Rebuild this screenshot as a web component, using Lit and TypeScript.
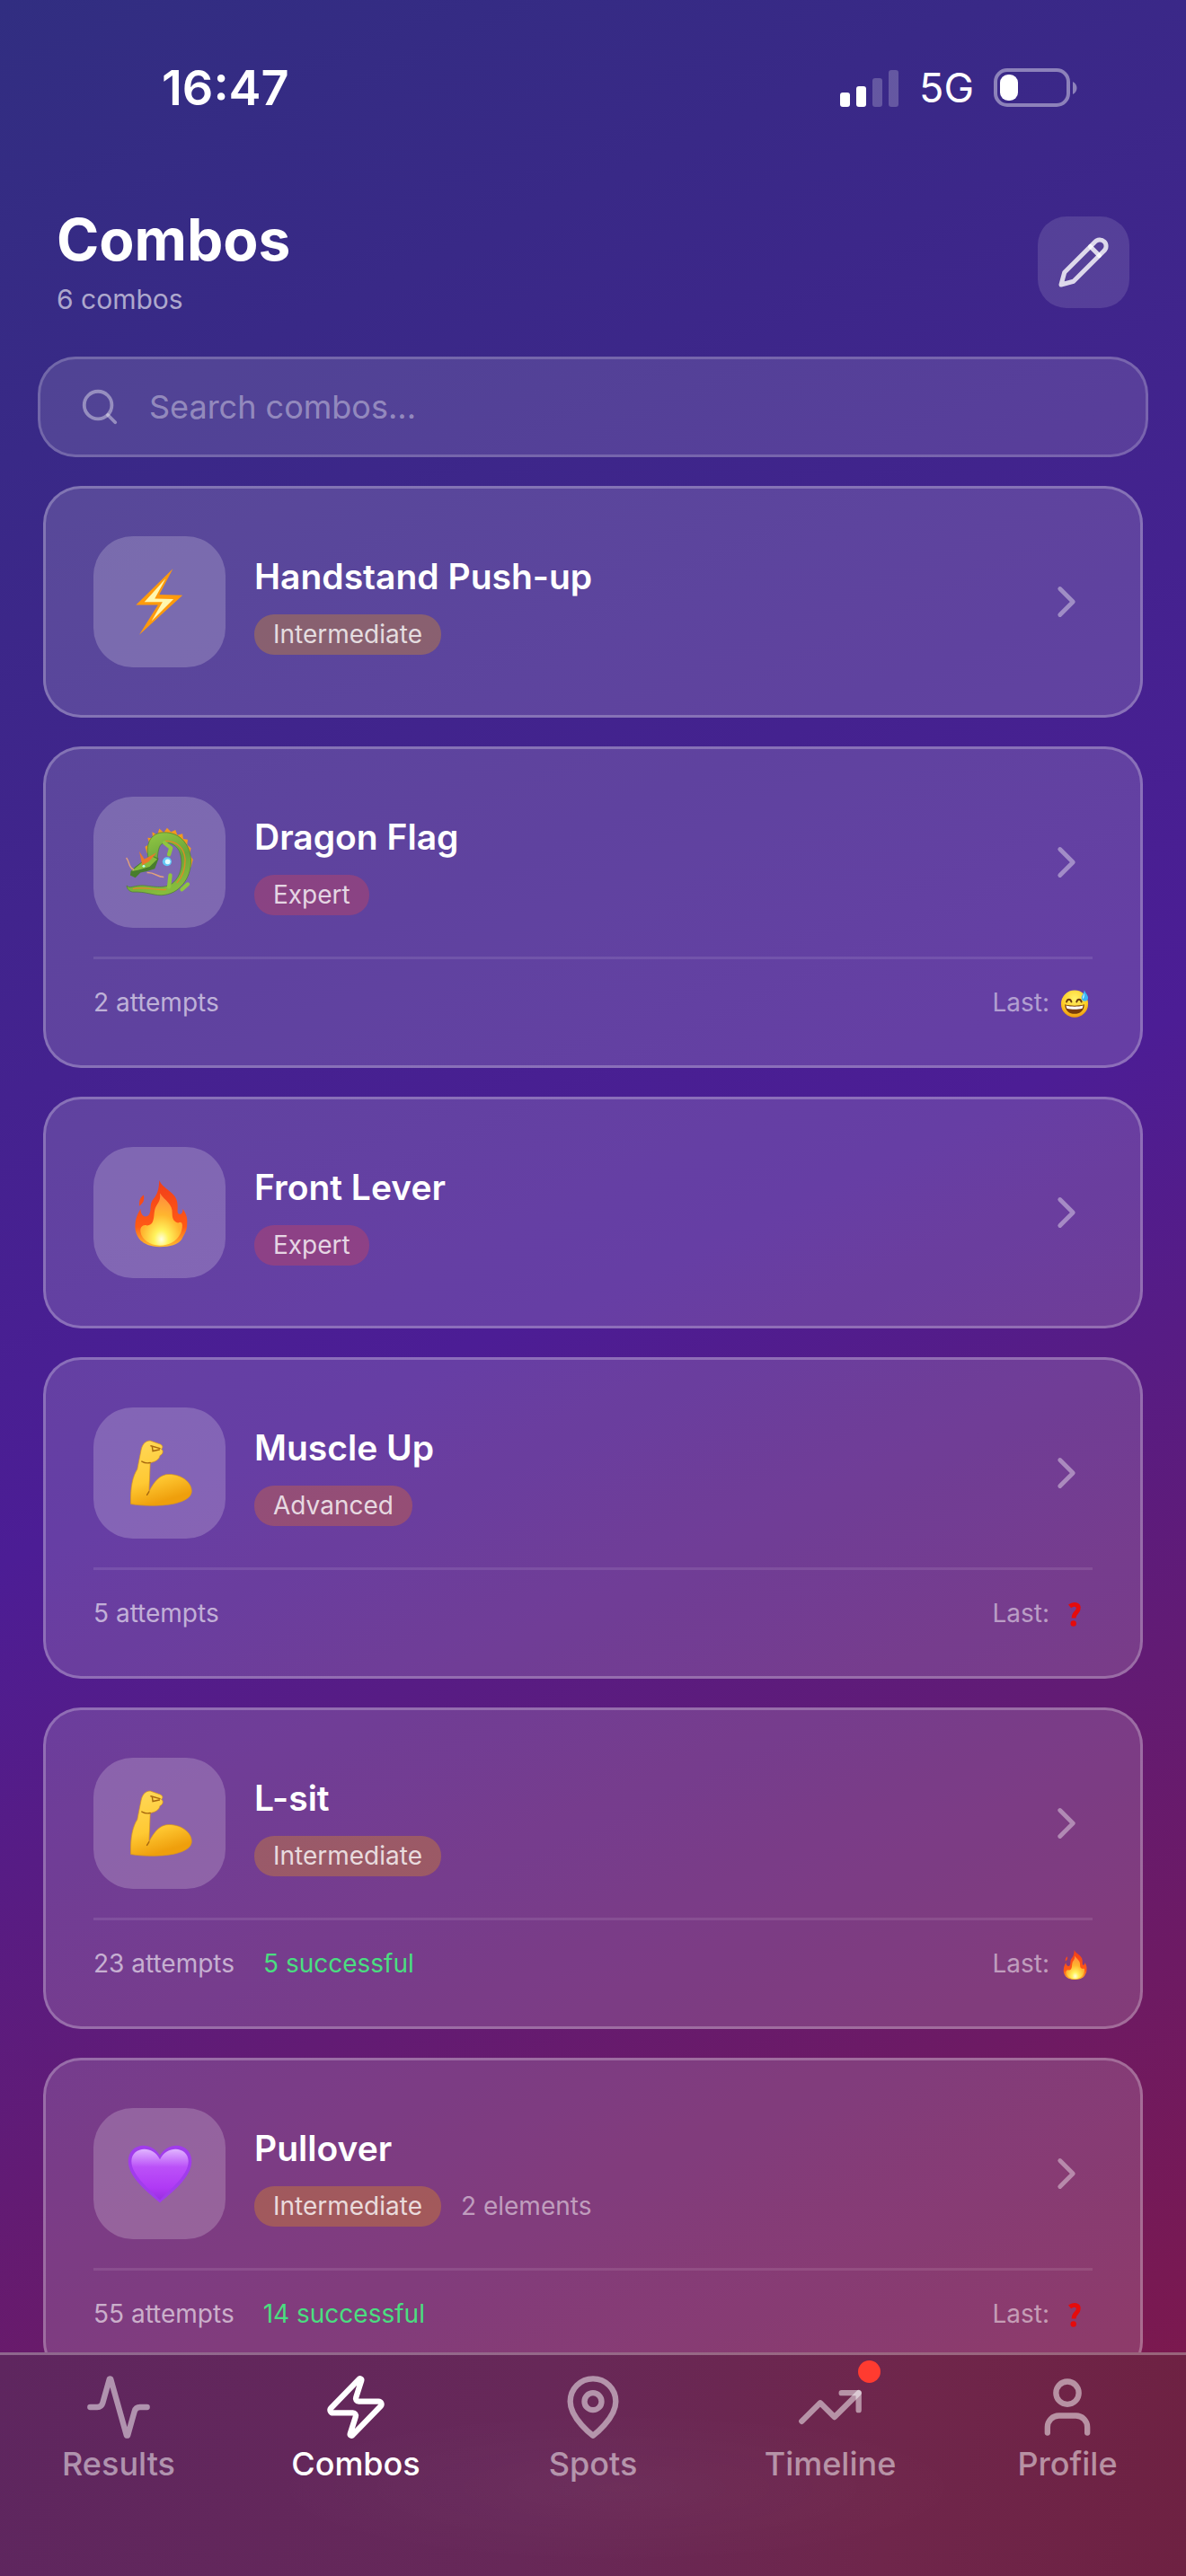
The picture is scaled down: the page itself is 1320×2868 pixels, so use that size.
import { LitElement, css, html, svg, TemplateResult } from 'lit'
import { customElement, property, state } from 'lit/decorators.js'
import { classMap } from 'lit/directives/class-map.js'

type Level = 'Intermediate' | 'Advanced' | 'Expert'

interface Combo {
  name: string
  emoji: string
  level: Level
  elements?: number
  attempts?: number
  successful?: number
  last?: string
}

const combos: Combo[] = [
  { name: 'Handstand Push-up', emoji: 'bolt', level: 'Intermediate' },
  { name: 'Dragon Flag', emoji: 'dragon', level: 'Expert', attempts: 2, last: 'sweat' },
  { name: 'Front Lever', emoji: 'fire', level: 'Expert' },
  { name: 'Muscle Up', emoji: 'arm', level: 'Advanced', attempts: 5, last: 'question' },
  { name: 'L-sit', emoji: 'arm', level: 'Intermediate', attempts: 23, successful: 5, last: 'fire' },
  { name: 'Pullover', emoji: 'heart', level: 'Intermediate', elements: 2, attempts: 55, successful: 14, last: 'question' },
]

// stroke icons on a 24px grid
const icons: Record<string, TemplateResult> = {
  activity: svg`<path d="M22 12h-2.48a2 2 0 0 0-1.93 1.46l-2.35 8.36a.25.25 0 0 1-.48 0L9.24 2.18a.25.25 0 0 0-.48 0l-2.35 8.36A2 2 0 0 1 4.49 12H2"/>`,
  zap: svg`<path d="M4 14a1 1 0 0 1-.78-1.63l9.9-10.2a.5.5 0 0 1 .86.46l-1.92 6.02A1 1 0 0 0 13 10h7a1 1 0 0 1 .78 1.63l-9.9 10.2a.5.5 0 0 1-.86-.46l1.92-6.02A1 1 0 0 0 11 14z"/>`,
  pin: svg`<path d="M20 10c0 6-8 12-8 12s-8-6-8-12a8 8 0 0 1 16 0Z"/><circle cx="12" cy="10" r="3"/>`,
  trending: svg`<path d="M22 7 13.5 15.5 8.5 10.5 2 17"/><path d="M16 7h6v6"/>`,
  user: svg`<path d="M19 21v-2a4 4 0 0 0-4-4H9a4 4 0 0 0-4 4v2"/><circle cx="12" cy="7" r="4"/>`,
  pencil: svg`<path d="M17 3a2.85 2.83 0 1 1 4 4L7.5 20.5 2 22l1.5-5.5Z"/><path d="m15 5 4 4"/>`,
  search: svg`<circle cx="11" cy="11" r="8"/><path d="m21 21-4.3-4.3"/>`,
  chevron: svg`<path d="m9 18 6-6-6-6"/>`,
}

const emojis: Record<string, TemplateResult> = {
  bolt: svg`
    <path fill="#ff9a0c" d="M70-1 49 39 85 40 18 101 47 55 13 55z"/>
    <path fill="#fff7b0" d="M59 14 26 50.500 54 50.500 37 80 71 46 42 45z"/>`,
  dragon: svg`
    <defs><linearGradient id="scales" x2=".4" y2="1"><stop stop-color="#9bd045"/><stop offset=".6" stop-color="#6ba53a"/><stop offset="1" stop-color="#86bb3d"/></linearGradient></defs>
    <path fill="#f39a1d" d="M30 36 27 26 34 22 31 12 39 13 38 3 46 8 49-2 56 4 61-3 67 3 74 0 77 8 85 6 86 14 93 15 92 23 98 28 96 38 101 46 98 58 88 40 70 14 45 18z"/>
    <path fill="url(#scales)" stroke="#4d8030" stroke-width="1" d="M32 44C27 18 38 4 56 4 82 3 98 25 98 48 98 75 80 100 52 101 38 101 28 95 8 96 2 95-2 90-1 86 3 92 10 85 26 86 45 88 62 92 74 78 84 66 86 48 80 33 74 21 62 18 54 21 48 24 47 34 46 46Z"/>
    <path fill="none" stroke="#d98d27" stroke-width="2" d="M58 17C78 17 88 30 89 46 89 62 84 74 76 82M8 91C28 87 44 94 60 92"/>
    <path fill="none" stroke="#8fc63f" stroke-width="6" stroke-linecap="round" stroke-linejoin="round" d="M57 20 67 28 64 38M66 70 64 88M84 92 93 84"/>
    <circle cx="61" cy="49" r="7" fill="#62c8f5"/><circle cx="62" cy="49" r="4" fill="#e2fbff"/>
    <path fill="#487d2d" d="M5 64 12 57 24 48 38 40 48 44 42 60 30 64 20 66 12 74 4 70z"/>
    <path fill="#86bd3c" d="M6 64 24 49 38 41 46 45 34 57 16 62z"/>
    <path fill="#e9782c" d="M22 51 18 33 26 45 45 35 33 49 22 55z"/>
    <path fill="none" stroke="#e0a07c" stroke-width="2" d="M10 62C0 57 4 50-2 43M30 66C42 65 45 73 56 73"/>
    <circle cx="25" cy="56" r="2" fill="#b4fff2"/>`,
  fire: svg`
    <defs>
      <linearGradient id="flame" x2="0" y2="1"><stop stop-color="#f13e19"/><stop offset=".7" stop-color="#ff5a16"/><stop offset="1" stop-color="#ffbd2e"/></linearGradient>
      <radialGradient id="core" cx=".5" cy=".88" r=".85"><stop stop-color="#fffddf"/><stop offset=".2" stop-color="#fff35c"/><stop offset=".55" stop-color="#ffb62f"/><stop offset="1" stop-color="#ff8b3d"/></radialGradient>
    </defs>
    <path fill="url(#flame)" d="M49 0C54 14 76 18 77 36 78 44 76 50 79 52 84 54 86 48 85 44 90 50 93 58 92 67 92 80 87 84 84 91 78 100 66 103 50 103 34 103 26 98 20 93 12 84 11 74 12 66 13 56 17 50 20 44 20 52 24 57 29 56 38 54 34 40 37 34 40 26 48 26 49 0ZM25 23C26 31 25 35 18 40 18 31 19 27 25 23Z"/>
    <path fill="url(#core)" d="M50 20C58 32 70 36 69 52 69 60 72 64 78 66 86 62 86 72 82 82 76 95 64 101 50 101 34 101 22 92 20 80 19 72 24 68 30 70 42 70 40 56 42 46 44 36 52 34 50 20Z"/>`,
  arm: svg`
    <defs><linearGradient id="skin" x2=".3" y2="1"><stop stop-color="#ffd95a"/><stop offset=".65" stop-color="#ffc933"/><stop offset="1" stop-color="#ef9f0c"/></linearGradient></defs>
    <path fill="url(#skin)" stroke="#d8951c" stroke-width="1" d="M21 14C23 5 28 0 35 0L49 5C55 7 55 11 52 13 56 15 55 21 50 23 49 29 43 33 35 34L34 60C33 67 34 73 33 79 41 63 50 52 64 52 83 52 99 64 99 78 99 92 74 99 50 100 32 101 18 100 5 98 4 72 8 55 15 44Z"/>
    <path fill="none" stroke="#a8690f" stroke-width="2" stroke-linecap="round" d="M36 8 50 12M38 9 39 16 49 14M22 32C27 35 31 35 35 34M33 79 30 84"/>`,
  heart: svg`
    <defs><linearGradient id="violet" x2="0" y2="1"><stop stop-color="#e0b5ff"/><stop offset=".35" stop-color="#bb51f8"/><stop offset=".75" stop-color="#b03af5"/><stop offset="1" stop-color="#9a2fe0"/></linearGradient></defs>
    <path fill="#a13cec" d="M50 95C35 82 1 57 1 31 1 3 36-2 50 22 64-2 99 3 99 31c0 26-34 51-49 64z"/>
    <path fill="url(#violet)" d="M50 91C38 77 6 54 6 31 6 9 38 4 50 28 62 4 94 9 94 31c0 23-32 46-44 60z"/>`,
  sweat: svg`
    <defs><radialGradient id="face" cx=".5" cy=".3" r=".7"><stop stop-color="#fff269"/><stop offset=".65" stop-color="#ffcf28"/><stop offset="1" stop-color="#ef980f"/></radialGradient></defs>
    <circle cx="50" cy="52" r="47" fill="url(#face)"/>
    <path fill="none" stroke="#6b3b0e" stroke-width="6" stroke-linecap="round" d="M22 45c3-11 14-11 17 0M57 45c3-11 14-11 17 0"/>
    <path fill="#7a3c0a" d="M16 54c20 6 47 6 68 0-1 23-16 33-34 33S17 77 16 54z"/>
    <path fill="#fff" d="M20 58c18 5 42 5 60 0l-3 10c-16 4-38 4-54 0z"/>
    <path fill="#39b5f5" d="M84 4c5 13 13 18 13 27 0 15-23 15-23 0 0-8 8-14 10-27z"/>
    <path fill="#c0edff" d="M83 15c2 8 1 14-3 20-5-6 1-12 3-20z"/>`,
  question: svg`
    <path fill="none" stroke="#e60b0b" stroke-width="15" d="M33 23c14-11 33-7 30 9-1 13-16 13-16 32"/>
    <circle cx="46" cy="83" r="10" fill="#e60b0b"/>`,
}

const icon = (name: string) => html`
  <svg class="icon" viewBox="0 0 24 24" fill="none" stroke="currentColor" stroke-width="2"
    stroke-linecap="round" stroke-linejoin="round" aria-hidden="true">${icons[name]}</svg>`

const emoji = (name: string) => html`
  <svg class="emoji" viewBox="0 0 100 100" aria-hidden="true">${emojis[name]}</svg>`

const shared = css`
  * {
    box-sizing: border-box;
  }
  button, a, input {
    font: inherit;
    color: inherit;
  }
  svg {
    display: block;
    flex: none;
    overflow: visible;
  }
`

@customElement('status-bar')
export class StatusBar extends LitElement {
  render() {
    return html`
      <span class="time">16:47</span>
      <div class="right">
        <svg width="66" height="42" viewBox="0 0 66 42" fill="#fff" aria-hidden="true">
          <rect y="26" width="11" height="16" rx="3"/>
          <rect x="18" y="19" width="11" height="23" rx="3"/>
          <rect x="36" y="10" width="11" height="32" rx="3" opacity=".22"/>
          <rect x="54" y="1" width="11" height="41" rx="3" opacity=".22"/>
        </svg>
        <span class="network">5G</span>
        <svg width="94" height="44" viewBox="0 0 94 44" aria-hidden="true">
          <rect x="2" y="2" width="81" height="39" rx="13" fill="none" stroke="#fff" stroke-opacity=".42" stroke-width="4"/>
          <rect x="7" y="7" width="20" height="29" rx="9" fill="#fff"/>
          <path d="M88 15c6 3 6 11 0 14z" fill="#fff" opacity=".42"/>
        </svg>
      </div>
    `
  }

  static styles = [shared, css`
    :host {
      display: flex;
      justify-content: space-between;
      align-items: center;
      padding: 65px 120px 0 180px;
    }
    .time {
      font-size: 54px;
      line-height: 66px;
      font-weight: 600;
    }
    .right {
      display: flex;
      align-items: center;
      gap: 22px;
    }
    .network {
      font-size: 45px;
      line-height: 54px;
      font-weight: 400;
    }
  `]
}

@customElement('combo-card')
export class ComboCard extends LitElement {
  @property({ attribute: false }) combo!: Combo

  renderStats() {
    const { attempts, successful, last } = this.combo
    if (attempts === undefined) {
      return null
    }
    return html`
      <div class="stats">
        <span>${attempts} attempts</span>
        ${successful ? html`<span class="successful">${successful} successful</span>` : null}
        <span class="last">Last: ${emoji(last ?? 'question')}</span>
      </div>
    `
  }

  render() {
    const { name, level, elements } = this.combo
    return html`
      <button class="card">
        <div class="main">
          <div class="tile">${emoji(this.combo.emoji)}</div>
          <div class="info">
            <div class="name">${name}</div>
            <div class="meta">
              <span class="badge ${level.toLowerCase()}">${level}</span>
              ${elements ? html`<span>${elements} elements</span>` : null}
            </div>
          </div>
          <div class="chevron">${icon('chevron')}</div>
        </div>
        ${this.renderStats()}
      </button>
    `
  }

  static styles = [shared, css`
    :host {
      display: block;
    }
    .card {
      display: block;
      width: 100%;
      padding: 53px;
      text-align: left;
      border: 3px solid rgba(255, 255, 255, 0.25);
      border-radius: 42px;
      background: rgba(255, 255, 255, 0.15);
      cursor: pointer;
    }
    .main {
      display: flex;
      align-items: center;
      gap: 32px;
    }
    .tile {
      display: flex;
      align-items: center;
      justify-content: center;
      width: 147px;
      height: 146px;
      border-radius: 44px;
      background: rgba(255, 255, 255, 0.2);
    }
    .tile .emoji {
      width: 72px;
      height: 72px;
    }
    .info {
      flex: 1;
    }
    .name {
      font-size: 39px;
      line-height: 62px;
      font-weight: 600;
      color: #fff;
    }
    .meta {
      display: flex;
      align-items: center;
      gap: 22px;
      margin-top: 11px;
      font-size: 28px;
      line-height: 33px;
      color: rgba(255, 255, 255, 0.5);
    }
    .badge {
      padding: 6px 21px;
      border-radius: 22px;
      color: rgba(255, 255, 255, 0.8);
    }
    .intermediate {
      background: rgba(245, 158, 11, 0.3);
    }
    .advanced {
      background: rgba(249, 115, 22, 0.3);
    }
    .expert {
      background: rgba(239, 68, 68, 0.3);
    }
    .chevron {
      color: rgba(255, 255, 255, 0.4);
    }
    .chevron .icon {
      width: 58px;
      height: 58px;
    }
    .stats {
      display: flex;
      align-items: center;
      gap: 32px;
      margin-top: 32px;
      padding-top: 32px;
      border-top: 3px solid rgba(255, 255, 255, 0.1);
      font-size: 28px;
      line-height: 33px;
      color: rgba(255, 255, 255, 0.6);
    }
    .successful {
      color: #4ade80;
    }
    .last {
      display: flex;
      align-items: center;
      gap: 12px;
      margin-left: auto;
      padding-right: 4px;
      color: rgba(255, 255, 255, 0.5);
    }
    .last .emoji {
      width: 32px;
      height: 32px;
    }
  `]
}

@customElement('tab-bar')
export class TabBar extends LitElement {
  @property() active = 'Combos'

  tabs = [
    { label: 'Results', icon: 'activity' },
    { label: 'Combos', icon: 'zap' },
    { label: 'Spots', icon: 'pin' },
    { label: 'Timeline', icon: 'trending', badge: true },
    { label: 'Profile', icon: 'user' },
  ]

  render() {
    return html`
      <nav>
        ${this.tabs.map(tab => html`
          <a href="#${tab.label.toLowerCase()}" class=${classMap({ tab: true, active: tab.label === this.active })}>
            <span class="glyph">
              ${icon(tab.icon)}
              ${tab.badge ? html`<i class="dot"></i>` : null}
            </span>
            ${tab.label}
          </a>
        `)}
      </nav>
    `
  }

  static styles = [shared, css`
    nav {
      display: grid;
      grid-template-columns: repeat(5, 1fr);
      padding: 20px 0 103px;
      border-top: 3px solid rgba(255, 255, 255, 0.3);
      background:
        radial-gradient(ellipse at 52% 60%, rgba(255, 255, 255, 0.03), transparent 40%),
        linear-gradient(100deg, #5e265f, #672858 45%, #6f264b 75%, #6e2142);
    }
    .tab {
      display: flex;
      flex-direction: column;
      align-items: center;
      gap: 3px;
      font-size: 36px;
      line-height: 44px;
      font-weight: 500;
      color: rgba(255, 255, 255, 0.5);
      text-decoration: none;
    }
    .active {
      color: #fff;
    }
    .glyph {
      position: relative;
    }
    .icon {
      width: 76px;
      height: 76px;
    }
    .dot {
      position: absolute;
      top: -14px;
      right: -18px;
      width: 25px;
      height: 25px;
      border-radius: 50%;
      background: #ff3b30;
    }
  `]
}

@customElement('app-root')
export class AppRoot extends LitElement {
  @state() query = ''

  onInput = (e: InputEvent) => {
    this.query = (e.target as HTMLInputElement).value
  }

  get visible() {
    const query = this.query.toLowerCase()
    return combos.filter(combo => combo.name.toLowerCase().includes(query))
  }

  render() {
    return html`
      <status-bar></status-bar>
      <header>
        <div>
          <h1>Combos</h1>
          <p>${combos.length} combos</p>
        </div>
        <button class="edit" aria-label="Edit combos">${icon('pencil')}</button>
      </header>
      <label class="search">
        ${icon('search')}
        <input type="text" aria-label="Search combos" placeholder="Search combos..." .value=${this.query} @input=${this.onInput}>
      </label>
      <main>
        ${this.visible.map(combo => html`<combo-card .combo=${combo}></combo-card>`)}
      </main>
      <tab-bar></tab-bar>
    `
  }

  static styles = [shared, css`
    :host {
      display: flex;
      flex-direction: column;
      height: 100vh;
      overflow: hidden;
      font-family: Inter, "Noto Sans", sans-serif;
      color: #fff;
      background: linear-gradient(155deg, #312e81, #4c1d95 50%, #831843);
    }
    header {
      display: flex;
      justify-content: space-between;
      align-items: flex-start;
      padding: 97px 63px 0;
    }
    h1 {
      margin: 0;
      font-size: 64px;
      line-height: 78px;
      font-weight: 700;
    }
    p {
      margin: 8px 0 0;
      font-size: 30px;
      line-height: 38px;
      color: rgba(255, 255, 255, 0.6);
    }
    .edit {
      display: flex;
      align-items: center;
      justify-content: center;
      width: 102px;
      height: 102px;
      margin-top: 13px;
      padding: 0;
      border: none;
      border-radius: 32px;
      background: rgba(255, 255, 255, 0.12);
      color: rgba(255, 255, 255, 0.8);
      cursor: pointer;
    }
    .edit .icon {
      width: 60px;
      height: 60px;
    }
    .search {
      display: flex;
      align-items: center;
      gap: 32px;
      margin: 45px 42px 32px;
      padding: 30px 43px;
      border: 3px solid rgba(255, 255, 255, 0.2);
      border-radius: 42px;
      background: rgba(255, 255, 255, 0.12);
      color: rgba(255, 255, 255, 0.4);
    }
    .search .icon {
      width: 46px;
      height: 46px;
    }
    .search input {
      flex: 1;
      min-width: 0;
      padding: 0;
      border: none;
      outline: none;
      background: none;
      font-size: 36px;
      line-height: 46px;
      color: #fff;
    }
    .search input::placeholder {
      color: rgba(255, 255, 255, 0.4);
    }
    main {
      display: flex;
      flex-direction: column;
      gap: 32px;
      flex: 1;
      min-height: 0;
      overflow: hidden;
      padding: 0 48px;
    }
    main combo-card {
      flex: none;
    }
  `]
}

declare global {
  interface HTMLElementTagNameMap {
    'app-root': AppRoot
    'status-bar': StatusBar
    'combo-card': ComboCard
    'tab-bar': TabBar
  }
}
